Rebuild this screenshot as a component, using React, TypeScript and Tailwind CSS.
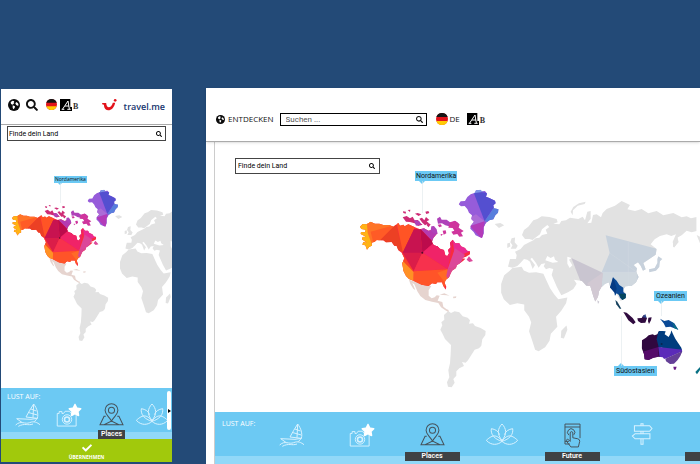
import { useId } from "react";
import { FaSearch, FaCheck, FaStar } from "react-icons/fa";

const LAND = "#e2e2e2";

function WorldMap({ viewBox, className }: { viewBox: string; className: string }) {
  const id = useId();
  const na = `${id}-na`;
  const eu = `${id}-eu`;
  const au = `${id}-au`;
  const gl = `${id}-gl`;
  return (
    <svg viewBox={viewBox} preserveAspectRatio="xMinYMin slice" className={className} aria-hidden="true">
      <defs>
        <clipPath id={na}>
          <path d="M30 140 38 132 50 133 62 125 75 131 88 131 100 135 118 135 130 140 145 129 150 137 160 134 164 139 175 133 195 142 210 148 222 145 235 152 255 148 262 160 250 174 246 185 251 196 262 199 270 206 282 210 286 226 292 228 297 220 294 210 302 202 300 188 308 179 316 190 328 190 333 199 345 204 351 212 360 214 360 223 348 230 335 235 346 236 340 242 330 250 320 256 318 264 306 272 301 283 297 292 287 300 284 308 289 320 287 329 280 318 276 307 262 307 258 312 246 310 236 318 215 314 190 302 177 297 168 288 160 272 157 250 163 235 155 218 145 211 140 198 133 197 125 186 108 187 100 181 90 181 80 180 74 185 65 188 66 197 58 200 51 209 46 196 37 194 40 186 50 188 36 178 38 171 48 170 32 162 33 156 45 157 47 149 34 147Z" />
        </clipPath>
        <clipPath id={gl}>
          <path d="M326 73 332 64 345 63 352 51 362 43 375 38 378 31 392 29 395 34 405 33 411 41 408 50 418 54 435 62 437 70 430 76 432 85 446 88 444 98 436 106 430 118 418 121 407 130 401 142 401 160 396 174 388 171 377 166 371 156 361 146 362 137 372 125 364 117 366 106 357 98 352 87 344 78 333 79Z" />
        </clipPath>
        <clipPath id={eu}>
          <path d="M24 245 30 222 48 222 50 210 45 200 62 192 72 180 88 172 100 166 107 160 118 158 126 150 142 146 137 134 148 126 142 120 126 133 120 148 108 157 98 165 88 162 75 162 66 150 72 135 85 125 100 106 112 102 125 94 148 96 170 102 173 112 160 116 178 118 184 108 198 106 210 98 235 102 248 95 255 106 262 80 272 78 272 101 262 115 274 113 279 90 290 88 303 97 308 84 320 72 345 62 365 48 390 60 382 73 405 78 425 72 445 85 470 78 490 91 520 84 545 97 560 94 573 100 590 96 590 138 575 142 560 137 546 150 532 158 536 171 522 188 518 171 528 148 514 153 500 148 480 153 464 163 452 178 470 192 467 209 448 222 430 234 437 253 429 257 422 242 414 232 401 240 411 250 409 261 416 276 408 292 395 302 376 304 370 315 378 326 376 340 362 348 353 332 344 315 332 311 327 292 315 296 304 307 297 319 294 336 286 350 280 334 271 303 259 302 246 288 222 284 230 296 220 312 204 322 184 331 171 307 155 270 160 252 148 249 138 253 131 244 136 235 124 237 116 248 108 234 96 218 91 222 105 240 98 252 90 230 82 224 72 222 62 233 52 243 38 248Z" />
        </clipPath>
        <clipPath id={au}>
          <path d="M306 211 318 203 326 196 338 193 344 196 352 193 357 183 368 183 377 184 374 193 386 201 392 190 394 181 399 192 406 206 414 218 424 233 427 244 421 258 413 270 402 281 390 282 378 274 368 262 355 260 340 263 326 270 314 268 312 252 305 234Z" />
        </clipPath>
      </defs>

      <g fill={LAND} transform="translate(350 270) scale(.3333)">
        <path d="M282 135 295 123 303 129 314 124 328 127 338 139 353 143 360 151 357 161 369 160 375 168 392 174 407 183 406 195 397 208 394 227 387 235 374 239 364 255 354 271 347 278 336 276 342 288 328 295 319 304 319 317 310 327 314 338 305 352 294 350 291 337 298 322 295 301 300 280 302 252 303 225 285 207 278 192 271 179 277 166 274 157 283 149Z" />
        <path fill="#e6d4cf" d="M177 29 215 41 244 48 236 61 236 77 245 85 254 82 260 76 269 77 263 92 277 96 280 110 290 118 296 120 295 126 286 121 273 112 265 99 246 95 226 90 211 78 202 64 193 43 187 39 196 60 190 56 181 42Z" />
        <path fill="#e6d4cf" d="M269 74 283 70 299 77 290 76ZM309 80 319 79 318 84 310 85Z" />
      </g>
      <g fill={LAND} transform="translate(344.3 176.9) scale(.4357)">
        <path d="M360 246 367 226 379 216 386 209 407 206 412 215 424 220 440 219 457 222 464 238 472 255 482 270 491 281 512 277 509 290 498 307 486 321 489 344 474 360 471 376 461 391 446 400 438 397 431 375 424 354 429 334 424 321 413 306 413 293 397 290 380 294 366 281 360 266Z" />
        <path d="M510 341 512 351 504 371 497 369 498 353 503 348ZM345 108 358 106 367 111 355 117Z" />
        <path d="M384 141 392 139 391 150 398 158 394 165 382 165 386 157 381 150ZM374 153 380 151 381 160 374 163Z" />
      </g>
      <g transform="translate(500 185) scale(.3333)">
        <g clipPath={`url(#${eu})`}>
          <path fill={LAND} d="M0 0H600V360H0Z" />
          <path fill="#c7d1dc" d="M317 151 470 191 480 310 375 308 304 305 305 262 329 204Z" />
          <path fill="#d0d8df" d="M304 262 411 262 410 310 304 306Z" />
          <path fill="#c9c5d0" d="M214 219 308 263 304 320 280 355 240 285Z" />
          <path fill="#d2c9d3" d="M262 295 308 263 304 320 286 352Z" />
          <path stroke="#d7dfe5" strokeWidth="1" fill="none" d="M329 204 411 262M385 169V304M304 262H411" />
        </g>
        <path fill="#fff" d="M136 226 142 213 152 219 162 214 165 224 175 231 158 233ZM202 215 215 219 207 224 217 241 209 249 202 236Z" />
        <path fill={LAND} d="M212 80 220 66 237 55 257 50 254 57 233 62 219 76 218 91ZM519 170 534 156 528 181 519 187ZM590 150 600 155 600 175Z" />
        <path fill="#c7d1dc" d="M475 214 487 222 480 229 478 246 468 257 448 262 447 253 464 249 472 234 472 222Z" />
        <path fill="#c9c5d0" d="M292 346 298 350 294 357Z" />
      </g>

      <g transform="translate(540 270) scale(.3333)">
        <path fill="#0b4a96" d="M219 22 230 32 238 45 250 53 250 66 258 73 257 84 247 90 240 83 237 75 230 70 225 77 224 68 210 52 216 43Z" />
        <path fill="#063b83" d="M219 22 230 55 225 77 224 68 210 52Z" />
        <path fill="#05465e" d="M236 71 257 71 257 84 247 90Z" />
        <path fill="#15405d" d="M226 90 232 95 244 116 239 116 229 103Z" />
        <path fill="#300b3f" d="M250 126 260 128 278 144 287 157 280 163 265 151ZM292 145 305 144 311 135 321 145 316 158 303 159 294 153ZM325 143 335 142 333 151 327 162 324 154Z" />
        <path fill="#2b468b" d="M307 141 316 132 320 144Z" />
        <path fill="#0b4a96" d="M360 146 373 153 386 150 403 160 415 179 403 175 391 170 377 172 371 160Z" />
        <path fill="#087184" d="M396 155 415 179 403 175ZM466 306 480 291 480 300 471 313Z" />
        <g clipPath={`url(#${au})`}>
          <path fill="#30083f" d="M295 180H362V280H295Z" />
          <path fill="#550b69" d="M300 248 355 231 356 275 309 275Z" />
          <path fill="#003c7e" d="M356 180H435V250L356 231 350 208Z" />
          <path fill="#5b2bb9" d="M355 231 435 240 380 265 360 270Z" />
          <path fill="#654097" d="M376 266 435 240 420 285 380 284Z" />
        </g>
        <path fill="#6c1b85" d="M400 290H410L407 299 402 299Z" />
        <circle cx="365" cy="222" r="3" fill="#082551" />
      </g>

      <g transform="translate(350 180) scale(.3333)">
        <g clipPath={`url(#${na})`}>
          <path fill="#f92c3d" d="M0 100H400V340H0Z" />
          <path fill="#ffb316" d="M25 120H66V215H25Z" />
          <path fill="#ff7427" d="M50 120 140 130 88 182 66 195 53 158Z" />
          <path fill="#ff5b26" d="M62 155 137 134 90 182 70 188Z" />
          <path fill="#ec4024" d="M138 133 90 181 130 205 160 216Z" />
          <path fill="#ff5425" d="M138 120H196L192 149 159 218Z" />
          <path fill="#db1d49" d="M192 148 158 218 191 274 217 218 208 150Z" />
          <path fill="#c81350" d="M192 148 210 148 217 218 158 218Z" />
          <path fill="#bc0b4c" d="M210 145 252 188 217 218Z" />
          <path fill="#d20956" d="M252 188 217 218 310 190 270 190Z" />
          <path fill="#b53bb1" d="M210 145 270 140 252 188Z" />
          <path fill="#f02368" d="M217 218 252 188 310 180 293 268Z" />
          <path fill="#e92b93" d="M308 170 370 210 340 222 312 215Z" />
          <path fill="#dc4799" d="M315 205 345 225 325 260 293 268Z" />
          <path fill="#f7314d" d="M217 218 293 268 191 274Z" />
          <path fill="#ff5428" d="M191 274 293 268 285 320 190 320Z" />
          <path fill="#ff6a27" d="M262 278 293 268 300 292 284 307Z" />
          <path fill="#db4792" d="M293 268 325 255 297 302 289 288Z" />
          <path fill="#f74728" d="M155 218 191 274 178 266 157 260Z" />
          <path fill="#ff9125" d="M155 240 191 276 190 305 155 295Z" />
          <circle cx="217" cy="218" r="3" fill="#520b2a" />
        </g>
        <path fill="#ce2b75" d="M158 112 170 108 180 115 188 110 194 121 203 120 210 128 218 134 204 138 194 130 180 126 168 125ZM159 94 168 95 167 101 160 99ZM173 90 181 89 180 96ZM195 101 203 99 214 103 206 108ZM226 95 235 93 238 99 229 102ZM208 116 216 113 223 121 228 111 238 120 230 124 237 130 225 136 217 128ZM234 129 242 133 236 142 230 136Z" />
        <path fill="#af42b9" d="M192 121 207 122 214 133 198 137ZM244 139 252 138 260 148 263 161 250 160 242 151ZM261 116 270 110 275 119 290 119 302 128 316 123 326 130 319 137 304 133 297 139 286 136 276 130 264 131Z" />
        <path fill="#cf359d" d="M300 127 315 122 329 133 326 143 341 153 333 158 339 169 328 170 322 162 310 164 304 155 313 152 308 144 295 143ZM263 134 272 133 276 139 268 142ZM278 152 287 151 289 160 281 164ZM272 162 279 163 273 168Z" />
        <path fill="#dc4799" d="M357 229 363 236 369 243 358 246 350 239ZM325 245 334 243 329 250Z" />
        <g clipPath={`url(#${gl})`}>
          <path fill="#965cda" d="M310 20H460V190H310Z" />
          <path fill="#544fd0" d="M370 35 450 40 435 78 404 124Z" />
          <path fill="#7d95e5" d="M370 20H400V35L372 40Z" />
          <path fill="#587edc" d="M404 124 435 78 460 88 430 130Z" />
          <path fill="#ac6cd7" d="M362 112 378 103 404 124 365 138Z" />
          <path fill="#b33bb9" d="M404 124 360 138 398 180Z" />
          <path fill="#9150cc" d="M404 124 398 180 415 140Z" />
        </g>
      </g>
    </svg>
  );
}

function Globe({ className }: { className: string }) {
  return (
    <svg viewBox="0 0 36 36" className={className} aria-hidden="true">
      <circle cx="18" cy="18" r="18" fill="#0b0b0b" />
      <path fill="#fff" d="M8 9 14 5 19 7 17 10 19 12 14 17 9 15ZM25 9 30 13 32 19 28 20 24 17 22 13ZM14 19 21 22 20 27 16 31 14 26Z" />
    </svg>
  );
}

function Flag({ className }: { className: string }) {
  return (
    <svg viewBox="0 0 12 12" className={className} role="img" aria-label="Deutsch">
      <circle cx="6" cy="6" r="6" fill="#e2131b" />
      <path fill="#151515" d="M.34 4A6 6 0 0 1 11.66 4Z" />
      <path fill="#ffcb05" d="M.34 8A6 6 0 0 0 11.66 8Z" />
    </svg>
  );
}

function Contrast() {
  return (
    <button aria-label="Kontrast" className="flex h-3 items-end font-['Liberation_Serif',serif] leading-none">
      <svg viewBox="0 0 36 36" className="h-3 w-3" aria-hidden="true">
        <path d="M0 0H31V24H36V36H0Z" />
        <path d="M8 30 24 6 28 30M15 21H27M5 31H13M22 31H32" className="fill-none stroke-white stroke-[3]" />
      </svg>
      <span className="pl-px text-[8px] leading-2 font-bold text-[#333]">B</span>
    </button>
  );
}

function Boat() {
  return (
    <svg viewBox="0 0 78 72" className="h-6 w-[26px] fill-none stroke-[#d8f2ff] stroke-[3]">
      <path d="M33 42C41 29 47 15 56 3 66 16 71 32 67 46L33 42ZM56 3 54 44M48 18 64 24M42 29 67 36M5 47 48 49 67 46 58 56M5 47 22 59M2 66C18 51 30 65 44 59 57 53 67 59 75 65M10 70C30 59 38 69 54 63" />
    </svg>
  );
}

function Camera() {
  return (
    <span className="relative flex h-6 w-[26px] items-end">
      <svg viewBox="0 0 66 54" className="h-[17px] w-[22px] fill-none stroke-[#d8f2ff] stroke-[3]">
        <path d="M2 11H8V5H17V11H22L27 4H41L46 11H62V51H2Z" />
        <circle cx="33" cy="30" r="15" />
        <circle cx="33" cy="30" r="8" strokeWidth="5" />
      </svg>
      <FaStar className="absolute top-0 right-0 size-[14px] text-white" />
    </span>
  );
}

function Pin() {
  return (
    <svg viewBox="0 0 74 70" className="h-6 w-[25px] fill-none stroke-[#46535b] stroke-[3]">
      <path d="M37 53C29 38 18 34 18 21A19 19 0 0 1 56 21C56 34 45 38 37 53Z" />
      <circle cx="37" cy="21" r="9" />
      <path d="M20 39H15L3 64H71L59 39H54M15 64 37 53 59 64" />
    </svg>
  );
}

function Lotus() {
  return (
    <svg viewBox="0 0 100 66" className="h-[22px] w-[34px] fill-none stroke-[#d8f2ff] stroke-[3]">
      <path d="M50 52C34 34 37 16 50 3 63 16 66 34 50 52ZM50 55C28 49 15 34 18 17 31 19 39 25 43 35M50 55C72 49 85 34 82 17 69 19 61 25 57 35M50 55C33 30 18 38 3 52 18 69 39 66 50 55C67 30 82 38 97 52 82 69 61 66 50 55Z" />
    </svg>
  );
}

function Touch() {
  return (
    <svg viewBox="0 0 52 76" className="h-[25px] w-[17px] fill-none stroke-[#46535b] stroke-[3]">
      <path d="M18 64H3V3H49V46M3 12H49M3 56H15" />
      <path d="M15 37A11 11 0 1 1 30 36M19 52V30C19 25 27 25 27 30V45L42 48Q49 50 48 56L44 73H21L8 56C5 51 11 47 15 52L19 56Z" />
    </svg>
  );
}

function Signpost() {
  return (
    <svg viewBox="0 0 64 64" className="h-[22px] w-[22px] fill-none stroke-[#d8f2ff] stroke-[3]">
      <path d="M29 8V2H35V8M10 8H54L61 16 54 24H10ZM29 24V31M35 24V31M55 31H12L4 38 12 46H55ZM29 46V62H35V46" />
    </svg>
  );
}

function CountrySearch({ id, small }: { id: string; small?: boolean }) {
  return (
    <div className={`flex items-center border border-[#444] bg-white text-black ${small ? "mx-[6px] h-[15px] px-px" : "h-4 px-[2px]"}`}>
      <input id={id} defaultValue="Finde dein Land" className="h-3 min-w-0 flex-1 font-['Roboto',sans-serif] text-[7px] leading-3 outline-none" />
      <label htmlFor={id} aria-label="Land suchen" className="px-[2px]"><FaSearch className="size-[6px]" /></label>
    </div>
  );
}

function Phone() {
  return (
    <section className="mt-px ml-px flex w-[171px] shrink-0 flex-col bg-white">
      <header className="flex h-9 items-start border-b border-[#aaa] px-[7px] pt-[10px]">
        <button aria-label="Entdecken"><Globe className="size-3" /></button>
        <button aria-label="Suchen" className="ml-[6px]"><FaSearch className="size-3" /></button>
        <button aria-label="Sprache" className="ml-[8px]"><Flag className="size-[11px]" /></button>
        <span className="ml-[3px]"><Contrast /></span>
        <a href="#" className="ml-auto flex text-[#16356e]">
          <svg viewBox="0 0 44 36" className="mr-[7px] h-3 w-[15px] fill-[#e3131b]" role="img" aria-label="TUI">
            <path d="M0 12H12C13 30 27 28 32 11H39C34 39 6 41 5 17L0 16Z" />
            <circle cx="39" cy="4" r="4" />
          </svg>
          <span className="pt-[2px] font-['Open_Sans',sans-serif] text-[9px] leading-3 font-semibold">travel.me</span>
        </a>
      </header>
      <div className="pt-px"><CountrySearch id="country-phone" small /></div>
      <div className="relative h-[247px] overflow-hidden">
        <WorldMap viewBox="345.6 126 223.5 322.9" className="absolute inset-0 size-full" />
        <div className="absolute top-[35px] left-[53px] bg-[#6bc9f4] px-px text-[5px] leading-[7px]">
          Nordamerika
          <i className="absolute top-full left-1 border-x-2 border-t-2 border-x-transparent border-t-[#6bc9f4]" />
          <i className="absolute top-full left-[6px] h-[20px] w-px bg-[#dfe7eb]/60" />
        </div>
      </div>
      <nav aria-label="Lust auf" className="relative h-[51px] overflow-hidden border-b-[7px] border-[#91d8f8] bg-[#6cc9f3]">
        <h2 className="absolute top-[5px] left-[6px] text-[7px] leading-2 text-white">LUST AUF:</h2>
        <ul className="flex h-[44px] pt-[15px] pl-[6px]">
          <li className="w-[41px] shrink-0"><button aria-label="Meer" className="flex h-6 w-full items-start justify-center"><Boat /></button></li>
          <li className="w-[42px] shrink-0"><button aria-label="Foto" className="flex h-6 w-full items-start justify-center"><Camera /></button></li>
          <li className="w-[42px] shrink-0"><button aria-label="Orte" className="flex h-6 w-full items-start justify-center"><Pin /></button></li>
          <li className="w-[40px] shrink-0"><button aria-label="Wellness" className="flex h-6 w-full items-start justify-center"><Lotus /></button></li>
        </ul>
        <button aria-label="Weiter" className="absolute top-[3px] right-[1px] flex h-[39px] w-1 items-center justify-end rounded-xs bg-white">
          <i className="border-y-2 border-l-[3px] border-y-transparent border-l-black" />
        </button>
      </nav>
      <div className="relative">
        <span className="absolute bottom-full left-[97px] w-[27px] bg-[#3f4245] text-center font-['Roboto',sans-serif] text-[7px] leading-[9px] font-semibold text-white">Places</span>
        <button className="flex h-[23px] w-full flex-col items-center bg-[#a1c90c] pt-1 text-[5px] leading-2 font-bold text-white">
          <FaCheck className="size-[10px]" />
          ÜBERNEHMEN
        </button>
      </div>
    </section>
  );
}

const topics = [
  { name: "Meer", icon: <Boat /> },
  { name: "Foto", icon: <Camera /> },
  { name: "Places", icon: <Pin />, active: true },
  { name: "Wellness", icon: <Lotus /> },
  { name: "Future", icon: <Touch />, active: true },
  { name: "Wege", icon: <Signpost /> },
];

function Desktop() {
  return (
    <section className="ml-[34px] flex min-w-0 flex-1 flex-col bg-white">
      <header className="relative flex h-[54px] items-center border-b border-[#aaa] pt-[9px] pl-[10px] shadow-sm">
        <a href="#" className="flex items-center gap-[3px] text-[8px] leading-3"><Globe className="size-[9px]" />ENTDECKEN</a>
        <div className="ml-[6px] flex h-[13px] w-[147px] items-center border border-black px-[3px]">
          <input id="search" placeholder="Suchen ..." className="h-[11px] min-w-0 flex-1 pl-[2px] font-['Roboto',sans-serif] text-[8px] leading-[11px] outline-none placeholder:text-[#555]" />
          <label htmlFor="search" aria-label="Suchen"><FaSearch className="size-[7px]" /></label>
        </div>
        <button className="ml-[9px] flex items-center gap-[2px] text-[8px] leading-3"><Flag className="size-3" />DE</button>
        <span className="ml-[7px]"><Contrast /></span>
      </header>
      <div className="ml-2 flex flex-1 flex-col border-l border-[#ccc]">
        <div className="relative h-[270px] overflow-hidden">
          <WorldMap viewBox="215 142 485 270" className="absolute inset-0 size-full" />
          <div className="relative mt-4 ml-5 w-[145px]"><CountrySearch id="country-desktop" /></div>
          <div className="absolute top-[29px] left-[200px] bg-[#6bc9f4] px-px font-['Roboto',sans-serif] text-[7px] leading-[10px]">
            Nordamerika
            <i className="absolute top-full left-[4px] border-x-[3px] border-t-[3px] border-x-transparent border-t-[#6bc9f4]" />
            <i className="absolute top-full left-[7px] h-[32px] w-px bg-[#dfe7eb]/60" />
          </div>
          <div className="absolute top-[149px] left-[439px] bg-[#6bc9f4] px-[2px] font-['Roboto',sans-serif] text-[7px] leading-[10px]">
            Ozeanien
            <i className="absolute top-full left-1 border-x-[3px] border-t-[3px] border-x-transparent border-t-[#6bc9f4]" />
            <i className="absolute top-full left-[7px] h-[15px] w-px bg-[#dfe7eb]/60" />
          </div>
          <div className="absolute top-[224px] left-[399px] bg-[#6bc9f4] px-[2px] font-['Roboto',sans-serif] text-[7px] leading-[10px]">
            Südostasien
            <i className="absolute bottom-full left-1 border-x-[3px] border-b-[3px] border-x-transparent border-b-[#6bc9f4]" />
            <i className="absolute bottom-full left-[7px] h-[50px] w-px bg-[#dfe7eb]/60" />
          </div>
        </div>
        <nav aria-label="Lust auf" className="relative h-[52px] overflow-hidden bg-[#6cc9f3]">
          <span className="absolute inset-x-0 bottom-0 h-2 bg-[#91d8f8]" />
          <h2 className="absolute top-2 left-[7px] text-[7px] leading-2 text-white">LUST AUF:</h2>
          <ul className="relative flex pl-[42px]">
            {topics.map((t) => (
              <li key={t.name} className="flex w-[70px] shrink-0 justify-center">
                <button aria-label={t.name} className="flex h-[49px] w-[55px] flex-col items-center justify-between pt-[11px]">
                  {t.icon}
                  {t.active && <span className="w-full bg-[#3f4245] text-center font-['Roboto',sans-serif] text-[7px] leading-[9px] font-semibold text-white">{t.name}</span>}
                </button>
              </li>
            ))}
            <li className="flex w-[70px] shrink-0 items-end justify-center"><span className="h-[9px] w-[55px] bg-[#3f4245]" /></li>
          </ul>
        </nav>
      </div>
    </section>
  );
}

export default function App() {
  return (
    <main className="flex min-h-screen items-start overflow-hidden bg-[#234a77] pt-[88px] font-['Open_Sans','Noto_Sans',sans-serif] text-[#111]">
      <Phone />
      <Desktop />
    </main>
  );
}
